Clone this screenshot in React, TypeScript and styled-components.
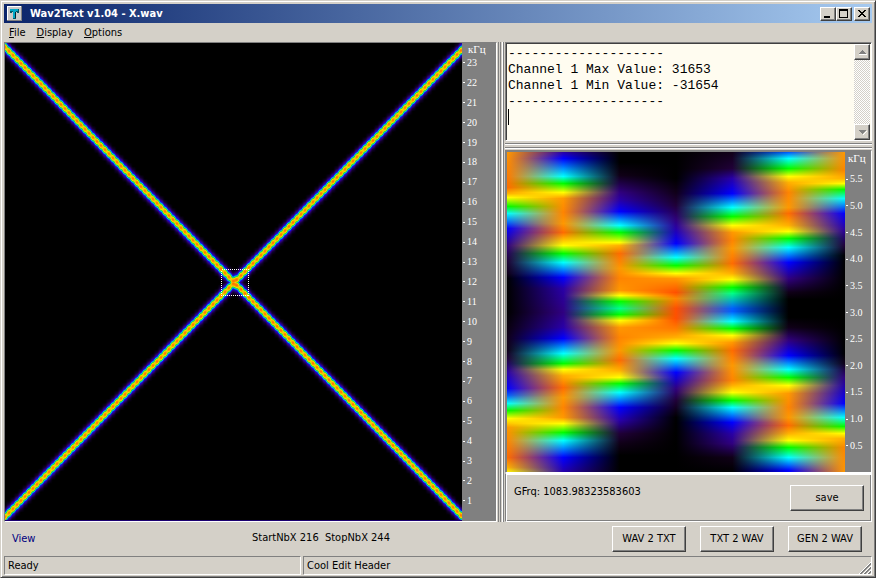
import React from 'react';
import styled, { createGlobalStyle } from 'styled-components';

const face = '#d4d0c8';
const shade = '#808080';
const dark = '#404040';

const GlobalStyle = createGlobalStyle`
  * { box-sizing: border-box; }
  body { margin: 0; background: ${face}; }
  body, button, input, textarea {
    font-family: 'DejaVu Sans Condensed', 'DejaVu Sans', sans-serif;
    font-size: 11px;
    line-height: 14px;
    color: #000;
  }
`;

const Window = styled.div`
  display: flex;
  flex-direction: column;
  height: 100vh;
  min-height: 400px;
  padding: 2px;
  background: ${face};
  border: 1px solid;
  border-color: ${face} ${dark} ${dark} ${face};
  box-shadow: inset 1px 1px #fff, inset -1px -1px ${shade};
`;

const TitleBar = styled.header`
  display: flex;
  align-items: center;
  height: 19px;
  margin: 1px 1px 0;
  padding: 0 2px 0 3px;
  background: linear-gradient(to right, #0a246a, #a6caf0);
`;

const Title = styled.h1`
  flex: 1;
  margin: 0 0 0 8px;
  font-size: 11px;
  line-height: 14px;
  font-weight: bold;
  color: #fff;
`;

const CaptionButton = styled.button<{ $gap?: boolean }>`
  display: grid;
  place-items: center;
  width: 16px;
  height: 14px;
  margin: 0 0 0 ${p => (p.$gap ? 2 : 0)}px;
  padding: 0;
  background: ${face};
  border: 1px solid;
  border-color: #fff ${dark} ${dark} #fff;
  box-shadow: inset -1px -1px ${shade};
`;

const MenuBar = styled.nav`
  display: flex;
  height: 19px;
  padding: 0 1px;
`;

const MenuItem = styled.button`
  padding: 0 5px;
  margin-right: 1px;
  background: none;
  border: 0;
`;

const Workspace = styled.main`
  display: grid;
  flex: 1;
  min-height: 0;
  grid-template-columns: minmax(0, 493fr) 8px minmax(0, 367fr);
  padding: 0 1px;
`;

const Pane = styled.section`
  display: flex;
  min-width: 0;
  min-height: 0;
  background: ${shade};
  border: 1px solid;
  border-color: ${shade} #fff #fff ${shade};
`;

const DetailPane = styled(Pane)`
  flex: 1;
  padding: 1px 0 0 1px;
`;

const VerticalSplitter = styled.div`
  margin: 0 1px;
  border: solid;
  border-width: 0 1px;
  border-color: #fff ${shade};
  box-shadow: inset 1px 0 ${face}, inset 2px 0 ${shade}, inset -1px 0 #fff;
`;

const HorizontalSplitter = styled.div`
  height: 5px;
  margin: 2px 0;
  border: solid;
  border-width: 1px 0;
  border-color: ${shade};
  box-shadow: inset 0 1px #fff, 0 1px #fff;
`;

const RightColumn = styled.div`
  display: flex;
  flex-direction: column;
  min-height: 0;
`;

const Plot = styled.svg`
  display: block;
  flex: 1;
  width: 0;
  min-width: 0;
  height: 100%;
  background: #000;
`;

const Scale = styled.div<{ $width: number; $foot: number }>`
  display: flex;
  flex-direction: column;
  width: ${p => p.$width}px;
  padding-bottom: ${p => p.$foot}px;
  color: #fff;
  font-family: 'Liberation Serif', serif;
  font-size: 10px;
  line-height: 10px;
`;

const Unit = styled.div<{ $indent: number }>`
  height: 10px;
  padding-left: ${p => p.$indent}px;
  font-size: 11px;
  line-height: 12px;
`;

const Ticks = styled.ol<{ $top: number }>`
  display: flex;
  flex: 1;
  flex-direction: column;
  min-height: 0;
  margin: ${p => p.$top}px 0 0;
  padding: 0;
  list-style: none;
`;

const Tick = styled.li`
  display: flex;
  flex: 1;
  align-items: center;
  gap: 2px;
  padding-left: 1px;
  &::before {
    content: '';
    width: 2px;
    height: 1px;
    background: #fff;
  }
`;

const Memo = styled.section`
  position: relative;
  display: flex;
  height: 99px;
  background: #fffcf0;
  border: 1px solid;
  border-color: ${shade} #fff #fff ${shade};
  box-shadow: inset 1px 1px ${dark};
  padding: 1px 1px 0 1px;
`;

const MemoText = styled.textarea`
  flex: 1;
  min-width: 0;
  padding: 2px 1px 1px;
  resize: none;
  overflow: hidden;
  border: 0;
  outline: 0;
  background: transparent;
  font-family: 'Liberation Mono', monospace;
  font-size: 13px;
  line-height: 16px;
`;

const Caret = styled.span`
  position: absolute;
  left: 2px;
  top: 66px;
  width: 1px;
  height: 16px;
  background: #000;
`;

const ScrollTrack = styled.div`
  display: flex;
  flex-direction: column;
  justify-content: space-between;
  width: 16px;
  background: repeating-conic-gradient(#fff 0 25%, ${face} 0 50%) 0 0 / 2px 2px;
`;

const ScrollButton = styled(CaptionButton)`
  height: 16px;
`;

const InfoPanel = styled.section`
  display: flex;
  align-items: flex-start;
  justify-content: space-between;
  height: 49px;
  padding: 11px 7px 0 8px;
  border: 1px solid;
  border-color: #fff #fff #fff ${shade};
  box-shadow: inset 1px 1px #fff, inset -1px -1px ${shade};
`;

const PushButton = styled.button`
  width: 74px;
  height: 26px;
  padding: 0;
  white-space: nowrap;
  background: ${face};
  border: 1px solid;
  border-color: #fff ${dark} ${dark} #fff;
  box-shadow: inset -1px -1px ${shade};
`;

const Footer = styled.section`
  display: grid;
  grid-template-columns: minmax(0, 1fr) auto minmax(0, 2fr);
  height: 34px;
  padding: 4px 11px 0 9px;
`;

const ViewLink = styled.a`
  padding-top: 6px;
  color: #000080;
  text-decoration: none;
`;

const Selection = styled.output`
  padding: 5px 0 0 4px;
  white-space: pre;
`;

const Actions = styled.div`
  display: flex;
  justify-content: flex-end;
  gap: 14px;
`;

const StatusBar = styled.footer`
  display: grid;
  grid-template-columns: minmax(0, 297fr) minmax(0, 569fr);
  gap: 2px;
  height: 19px;
  margin: 0 1px;
`;

const StatusCell = styled.div`
  display: flex;
  align-items: center;
  justify-content: space-between;
  padding-left: 3px;
  border: 1px solid;
  border-color: ${shade} #fff #fff ${shade};
`;

const Grip = styled.svg`
  align-self: flex-end;
  display: block;
`;

/* ---- chirp plot: two crossing sweeps, one cell every 4 units.
   Cells carry a grey level; the filter turns the level into a colour. ---- */

const CELL = 4;
const HALF = 12;
const levels: [number, number][] = [
  [0, 1], [1, 0.92], [2, 0.8], [3, 0.65], [4, 0.5], [5, 0.39], [7, 0.24], [9, 0.11], [12, 0],
];
const levelStops = [
  ...levels.slice(1).reverse().map(([d, v]) => [HALF - d, v]),
  ...levels.map(([d, v]) => [HALF + d, v]),
];

const SweepRect = styled.rect`
  mix-blend-mode: lighten;
`;

function SweepCell({ x, y }: { x: number; y: number }) {
  return <SweepRect x={x} y={y - HALF} width={CELL} height={HALF * 2} fill="url(#level)" />;
}

function SweepPlot() {
  const cells = Array.from({ length: 116 }, (_, i) => {
    const x = i * CELL - 2;
    return (
      <React.Fragment key={i}>
        <SweepCell x={x} y={4 + i * CELL * 1.027} />
        <SweepCell x={x} y={474 - i * CELL * 1.023} />
      </React.Fragment>
    );
  });
  return (
    <Plot viewBox="0 0 457 478" preserveAspectRatio="none" role="img" aria-label="Spectrogram">
      <defs>
        <linearGradient id="level" x1="0" y1="0" x2="0" y2="1">
          {levelStops.map(([at, v]) => {
            const g = Math.round(v * 255);
            return <stop key={at} offset={at / (HALF * 2)} stopColor={`rgb(${g},${g},${g})`} />;
          })}
        </linearGradient>
        <filter id="heat" x="0" y="0" width="457" height="478" filterUnits="userSpaceOnUse" colorInterpolationFilters="sRGB">
          <feGaussianBlur stdDeviation="0.8 0.2" />
          <feComponentTransfer>
            <feFuncR type="table" tableValues="0 .08 .18 .08 0 .15 .92 1 1" />
            <feFuncG type="table" tableValues="0 0 0 .05 .72 .88 .88 .6 .4" />
            <feFuncB type="table" tableValues="0 .2 .5 .9 .92 .2 0 0 0" />
          </feComponentTransfer>
        </filter>
      </defs>
      <g filter="url(#heat)">
        <rect width="457" height="478" fill="#000" />
        {cells}
      </g>
      <path d="M0 477.5H457" stroke="#1c0070" />
      <rect x="216.5" y="226.5" width="27" height="26" fill="none" stroke="#fff" strokeDasharray="1 1" shapeRendering="crispEdges" />
    </Plot>
  );
}

/* ---- zoomed plot: seven sample columns, blended sideways row by row ---- */

const palette: Record<string, string> = {
  K: '000000', k: '100018', d: '200038', p: '300080', v: '2800a8', B: '0000ff', b: '0060ff',
  C: '00ffff', c: '00ff88', G: '00ff00', Y: 'ffff00', y: 'ffb000', o: 'ff9800',
  O: 'ff8400', r: 'ff6c00', R: 'ff5000',
};

const columns = [
  'o0 r35 y41 Y45 G54 C61 B76 p93 d108 k121 K126 K160 k185 k198 d206 v220 B236 b243 C251 G258 Y266 o275 O290 r305 y315 Y320',
  'v0 B6 C24 G31 Y40 o46 O60 o71 r80 y86 Y93 G101 C110 B125 v136 p160 v175 B186 C201 G211 Y217 y223 r235 o245 O255 o265 Y271 G280 C288 B305 v320',
  'K0 K10 k23 p40 v48 B59 C73 G80 Y90 y93 r101 o116 O126 o138 Y143 G149 c156 G162 Y168 o175 O185 o198 r208 y218 Y225 G231 C240 B255 v268 d281 k291 K303 K320',
  'K0 K26 k40 d53 p68 v76 B91 C105 G113 Y121 o126 R140 O146 R156 R166 O178 y185 Y191 G198 C206 B220 p236 d248 K265 K320',
  'k0 d16 v26 B41 C55 G64 Y73 o80 O88 o96 r111 y121 Y127 G135 c141 b156 b159 C169 G176 Y183 o190 r198 o213 O228 y233 Y240 G248 C255 B270 v281 p291 k305 K320',
  'b0 C6 G16 Y24 y30 O40 o55 r61 y73 Y79 G86 C95 B110 p126 k140 K147 K165 k175 p188 B203 C217 G225 Y233 o241 O255 o265 r273 y281 Y288 G295 C305 B318 B320',
  'o0 O18 y26 Y31 G37 C46 B61 v76 d93 K103 K201 k211 p225 B251 C265 G274 Y281 y286 O295 o320',
];

const parsed = columns.map(c =>
  c.split(' ').map(s => {
    const hex = palette[s[0]];
    return {
      at: Number(s.slice(1)),
      rgb: [0, 2, 4].map(n => parseInt(hex.slice(n, n + 2), 16)),
    };
  })
);

function sample(stops: { at: number; rgb: number[] }[], y: number) {
  let i = 0;
  while (i < stops.length - 2 && stops[i + 1].at <= y) i++;
  const a = stops[i];
  const b = stops[i + 1];
  const t = Math.min(1, Math.max(0, (y - a.at) / (b.at - a.at)));
  return `rgb(${a.rgb.map((v, n) => Math.round(v + (b.rgb[n] - v) * t)).join(',')})`;
}

function DetailPlot() {
  const rows = Array.from({ length: 320 }, (_, y) => y);
  return (
    <Plot viewBox="0 0 339 320" preserveAspectRatio="none" shapeRendering="crispEdges" role="img" aria-label="Selection detail">
      <defs>
        {rows.map(y => (
          <linearGradient id={`row${y}`} key={y}>
            {parsed.map((c, i) => <stop key={i} offset={i / 6} stopColor={sample(c, y)} />)}
          </linearGradient>
        ))}
      </defs>
      {rows.map(y => <rect key={y} y={y} width="339" height="1" fill={`url(#row${y})`} />)}
    </Plot>
  );
}

const log = [
  '--------------------',
  'Channel 1 Max Value: 31653',
  'Channel 1 Min Value: -31654',
  '--------------------',
  '',
].join('\n');

const mainTicks = Array.from({ length: 23 }, (_, i) => String(23 - i));
const detailTicks = Array.from({ length: 11 }, (_, i) => ((11 - i) / 2).toFixed(1));

export default function App() {
  return (
    <>
      <GlobalStyle />
      <Window>
        <TitleBar>
          <svg width="15" height="15" viewBox="0 0 15 15" shapeRendering="crispEdges" aria-hidden="true">
            <path d="M0 0h15v15H0z" fill="#808080" />
            <path d="M0 0h14v14H0z" fill="#fff" />
            <path d="M1 1h13v13H1z" fill="#c8c8c8" />
            <path d="M3 3h9v4h-2V6h-1v7H6V6H5v1H3z" fill="#005868" />
            <path d="M3 3h8v2H9v7H6V5H3z" fill="#00a8c8" />
            <path d="M8 6h1v6H8z" fill="#002838" />
          </svg>
          <Title>Wav2Text v1.04 - X.wav</Title>
          <CaptionButton aria-label="Minimize">
            <svg width="12" height="10" shapeRendering="crispEdges"><path d="M2 7h6v2H2z" /></svg>
          </CaptionButton>
          <CaptionButton aria-label="Maximize">
            <svg width="12" height="10" shapeRendering="crispEdges">
              <path d="M1 0h9v9H1zM2 2v6h7V2z" fillRule="evenodd" />
            </svg>
          </CaptionButton>
          <CaptionButton aria-label="Close" $gap>
            <svg width="12" height="10" shapeRendering="crispEdges">
              <path d="M2 1h2v1h1v1h2V2h1V1h2v1H9v1H8v1H7v1h1v1h1v1h1v1H8V7H7V6H5v1H4v1H2V7h1V6h1V5h1V4H4V3H3V2H2z" />
            </svg>
          </CaptionButton>
        </TitleBar>
        <MenuBar>
          <MenuItem><u>F</u>ile</MenuItem>
          <MenuItem><u>D</u>isplay</MenuItem>
          <MenuItem><u>O</u>ptions</MenuItem>
        </MenuBar>
        <Workspace>
          <Pane>
            <SweepPlot />
            <Scale $width={34} $foot={10}>
              <Unit $indent={6}>кГц</Unit>
              <Ticks $top={0}>{mainTicks.map(t => <Tick key={t}>{t}</Tick>)}</Ticks>
            </Scale>
          </Pane>
          <VerticalSplitter />
          <RightColumn>
            <Memo>
              <MemoText aria-label="Log" defaultValue={log} spellCheck={false} />
              <Caret />
              <ScrollTrack>
                <ScrollButton aria-label="Scroll up">
                  <svg width="12" height="12" shapeRendering="crispEdges">
                    <path d="M6 4h1v1h1v1h1v1h1v1H3V7h1V6h1V5h1z" fill={shade} /><path d="M3 8h8v1H3z" fill="#fff" />
                  </svg>
                </ScrollButton>
                <ScrollButton aria-label="Scroll down">
                  <svg width="12" height="12" shapeRendering="crispEdges">
                    <path d="M10 5h1v1h-1v1H9v1H8v1H7V8h1V7h1V6h1z" fill="#fff" />
                    <path d="M3 4h7v1H9v1H8v1H7v1H6V7H5V6H4V5H3z" fill={shade} />
                  </svg>
                </ScrollButton>
              </ScrollTrack>
            </Memo>
            <HorizontalSplitter />
            <DetailPane>
              <DetailPlot />
              <Scale $width={26} $foot={13}>
                <Unit $indent={3}>кГц</Unit>
                <Ticks $top={4}>{detailTicks.map(t => <Tick key={t}>{t}</Tick>)}</Ticks>
              </Scale>
            </DetailPane>
            <InfoPanel>
              <output>GFrq: 1083.98323583603</output>
              <PushButton>save</PushButton>
            </InfoPanel>
          </RightColumn>
        </Workspace>
        <Footer>
          <ViewLink href="#view">View</ViewLink>
          <Selection>StartNbX 216  StopNbX 244</Selection>
          <Actions>
            <PushButton>WAV 2 TXT</PushButton>
            <PushButton>TXT 2 WAV</PushButton>
            <PushButton>GEN 2 WAV</PushButton>
          </Actions>
        </Footer>
        <StatusBar>
          <StatusCell>Ready</StatusCell>
          <StatusCell>
            Cool Edit Header
            <Grip width="13" height="13" aria-hidden="true">
              <path d="M1 13L13 1M5 13L13 5M9 13l4-4" stroke="#fff" />
              <path d="M2 13L13 2M3 13L13 3M6 13l7-7M7 13l6-6M10 13l3-3M11 13l2-2" stroke={shade} />
            </Grip>
          </StatusCell>
        </StatusBar>
      </Window>
    </>
  );
}
